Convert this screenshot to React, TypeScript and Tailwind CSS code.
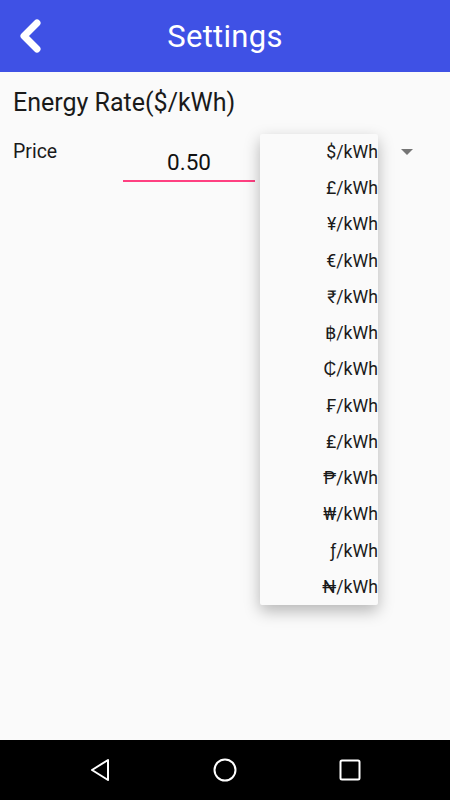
const UNITS = ["$", "£", "¥", "€", "₹", "฿", "₵", "₣", "₤", "₱", "₩", "ƒ", "₦"];

export default function App() {
  return (
    <div className="w-[450px] h-[800px] bg-[#fafafa] flex flex-col font-['Roboto',sans-serif] relative overflow-hidden">
      {/* Toolbar */}
      <div className="h-[72px] bg-[#3f51e5] relative flex items-center justify-center shrink-0">
        <button className="absolute left-[17px] top-[19px] w-[26px] h-[34px] flex items-center justify-center">
          <svg width="24" height="34" viewBox="0 0 24 34">
            <path d="M19 4 L6 17 L19 30" fill="none" stroke="white" strokeWidth="7" strokeLinecap="round" strokeLinejoin="round" />
          </svg>
        </button>
        <span className="text-white text-[31px] leading-none tracking-[0.3px]">Settings</span>
      </div>

      {/* Body */}
      <div className="flex-1 px-[13px] pt-[16px]">
        <p className="text-[25px] leading-[30px] text-[#1a1a1a]">Energy Rate($/kWh)</p>
        <div className="flex items-start mt-[22px]">
          <span className="text-[19.5px] leading-[24px] text-[#1a1a1a] w-[110px]">Price</span>
          <div className="w-[132px] flex flex-col items-center pt-[9px]">
            <span className="text-[22.5px] leading-[26px] text-[#111]">0.50</span>
            <div className="w-full h-[2px] bg-[#ff4081] mt-[5px]" />
          </div>
          <div className="flex-1 flex justify-end pr-[24px] pt-[9px]">
            <svg width="12" height="7" viewBox="0 0 12 7">
              <path d="M0 0 L12 0 L6 6 Z" fill="#757575" />
            </svg>
          </div>
        </div>
      </div>

      {/* Dropdown popup */}
      <div className="absolute left-[260px] top-[134px] w-[118px] bg-[#fafafa] rounded-[2px] shadow-[0_6px_16px_rgba(0,0,0,0.28)] flex flex-col">
        {UNITS.map(u => (
          <div key={u} className="h-[36.25px] flex items-center justify-end text-[17.7px] text-[#1a1a1a] whitespace-nowrap overflow-hidden">
            {u}/kWh
          </div>
        ))}
      </div>

      {/* Nav bar */}
      <div className="h-[60px] bg-black grid grid-cols-[125px_125px_125px] justify-center items-center shrink-0">
        <div className="flex justify-center">
          <svg width="22" height="24" viewBox="0 0 22 24">
            <path d="M19 2 L3 12 L19 22 Z" fill="none" stroke="white" strokeWidth="2" strokeLinejoin="round" />
          </svg>
        </div>
        <div className="flex justify-center">
          <svg width="24" height="24" viewBox="0 0 24 24">
            <circle cx="12" cy="12" r="10.5" fill="none" stroke="white" strokeWidth="2" />
          </svg>
        </div>
        <div className="flex justify-center">
          <svg width="22" height="22" viewBox="0 0 22 22">
            <rect x="1.5" y="1.5" width="19" height="19" rx="1.5" fill="none" stroke="white" strokeWidth="2" />
          </svg>
        </div>
      </div>
    </div>
  );
}
